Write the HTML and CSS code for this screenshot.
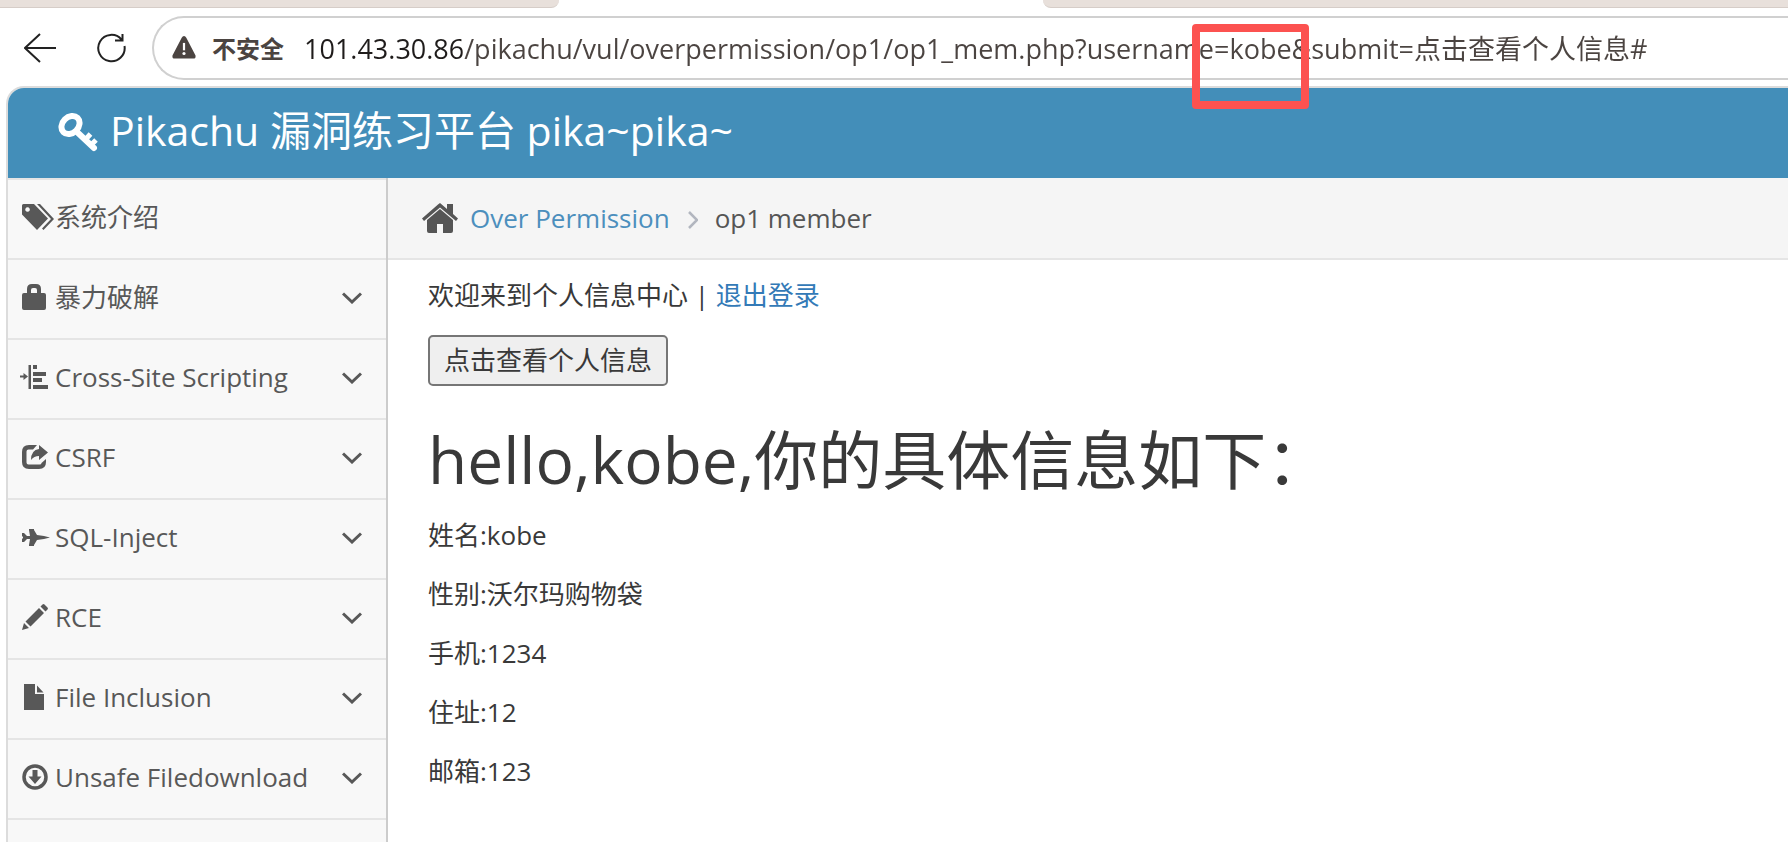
FILE: index.html
```html
<!DOCTYPE html>
<html lang="zh-CN">
<head>
  <meta charset="UTF-8">
  <meta name="viewport" content="width=device-width, initial-scale=1.0">
  <title>Get the pikachu</title>
  <link rel="stylesheet" href="styles.css">
</head>
<body>
  <!-- icons used more than once -->
  <svg class="sprite" aria-hidden="true">
    <symbol id="chevron" viewBox="0 0 20 12">
      <path d="M1 1.500L10 10L19 1.500" fill="none" stroke="currentColor" stroke-width="3"/>
    </symbol>
  </svg>

  <div class="tab-strip">
    <div class="tab tab-left"></div>
    <div class="tab tab-right"></div>
  </div>

  <div class="toolbar">
    <button type="button" class="nav-btn" aria-label="Back">
      <svg width="32" height="32" viewBox="0 0 32 32" fill="none" stroke="#222" stroke-width="2"><path d="M32 16H1M16 2L1 16L16 30"/></svg>
    </button>
    <button type="button" class="nav-btn" aria-label="Reload">
      <svg width="32" height="32" viewBox="0 0 32 32" fill="none" stroke="#222" stroke-width="2"><path d="M28.500 14A13.200 13.200 0 1 1 25.500 7.500M26.500 2V8.500H19"/></svg>
    </button>
    <div class="address">
      <svg width="24" height="24" viewBox="0 0 26 26"><path fill="#4b4441" d="M13 0Q14.500 0 15.500 2L25.500 21Q26 24.500 23 24.500H3Q0 24.500 .5 21L10.500 2Q11.500 0 13 0Z"/><path fill="#fff" d="M11.800 7.500h2.400v8h-2.400z"/><circle cx="13" cy="19" r="1.700" fill="#fff"/></svg>
      <label for="url">不安全</label>
      <input type="text" id="url" value="101.43.30.86/pikachu/vul/overpermission/op1/op1_mem.php?username=kobe&amp;submit=点击查看个人信息#">
    </div>
    <div class="marker"></div>
  </div>

  <div class="page">
    <header class="navbar">
      <a href="#" class="brand">
        <svg width="40" height="40" viewBox="0 0 40 40" fill="none" stroke="#fff"><ellipse cx="12.500" cy="13" rx="8" ry="10" stroke-width="6" transform="rotate(45 12.500 13)"/><path d="M19 20L36 36" stroke-width="6" stroke-linecap="round"/><path d="M27 28L32.500 22M33 33L38 28" stroke-width="5"/></svg>
        Pikachu 漏洞练习平台 pika~pika~
      </a>
    </header>

    <div class="main-container">
      <nav class="sidebar">
        <ul>
          <li><a href="#">
            <svg viewBox="0 0 32 26"><path d="M0 1.500Q0 0 1.500 0H12L26 14.500L15 26L0 10.500ZM5.500 3.200A2.300 2.300 0 1 0 5.600 3.200Z" fill-rule="evenodd"/><path d="M15 0H18L32 15L21.500 26L20 24.500L29 15Z"/></svg>
            系统介绍</a></li>
          <li><a href="#">
            <svg viewBox="0 0 32 26"><path d="M5 9V5Q5 0 10 0H14Q19 0 19 5V9H22Q24 9 24 11V24Q24 26 22 26H2Q0 26 0 24V11Q0 9 2 9ZM9 9H15V6Q15 4 13 4H11Q9 4 9 6Z" fill-rule="evenodd"/></svg>
            暴力破解<svg class="arrow"><use href="#chevron"/></svg></a></li>
          <li><a href="#">
            <svg viewBox="0 0 32 26"><path d="M-2 11.500H1.500V9L6 12.500L1.500 16V13.500H-2ZM6.500 1H9V25H6.500ZM11 1H15V5H11ZM11 8H24V12H11ZM11 14H20V18H11ZM11 21H26V25H11Z"/></svg>
            Cross-Site Scripting<svg class="arrow"><use href="#chevron"/></svg></a></li>
          <li><a href="#">
            <svg viewBox="0 0 32 26"><path d="M15 1H7Q0 1 0 8V18Q0 25 7 25H17Q24 25 24 18V15L19.500 19Q19.500 20.500 17.500 20.500H6.500Q4.500 20.500 4.500 18.500V7.500Q4.500 5.500 6.500 5.500H11Z"/><path d="M17 1L26 8.500L17 16V12Q12 12 9 16Q9 6 17 5Z"/></svg>
            CSRF<svg class="arrow"><use href="#chevron"/></svg></a></li>
          <li><a href="#">
            <svg viewBox="0 0 32 26"><path d="M0 9H2L5 12H8L7 6V5H12V6L15 11L22 12L28 13.500L22 15L15 16L12 21V22H7V21L8 15H5L2 18H0V15L1 14V13L0 12Z"/></svg>
            SQL-Inject<svg class="arrow"><use href="#chevron"/></svg></a></li>
          <li><a href="#">
            <svg viewBox="0 0 32 26"><path d="M0 26L2 19L7 24ZM3.500 17.500L17 4L22 9L8.500 22.500ZM18.500 2.500L20.500 .5Q21.500 -.5 22.500 .5L25.500 3.500Q26.500 4.500 25.500 5.500L23.500 7.500Z"/></svg>
            RCE<svg class="arrow"><use href="#chevron"/></svg></a></li>
          <li><a href="#">
            <svg viewBox="0 0 32 26"><path d="M2 0H13V10H22V26H2ZM15 1.500L21.500 8.500H15Z"/></svg>
            File Inclusion<svg class="arrow"><use href="#chevron"/></svg></a></li>
          <li><a href="#">
            <svg viewBox="0 0 32 26"><circle cx="13" cy="13" r="11" fill="none" stroke="currentColor" stroke-width="3.500"/><path d="M10.500 6H15.500V12.500H19.500L13 20L6.500 12.500H10.500Z"/></svg>
            Unsafe Filedownload<svg class="arrow"><use href="#chevron"/></svg></a></li>
        </ul>
      </nav>

      <main class="main-content">
        <div class="breadcrumbs">
          <svg class="home" width="36" height="30" viewBox="0 0 36 30"><path d="M18 6L31 17V28Q31 30 29 30H21V21H15V30H7Q5 30 5 28V17Z"/><path d="M18 0L25 6V1H31V11L36 15.500L34 18L18 4.500L2 18L0 15.500L16 1.500Q17 .5 18 0Z"/></svg>
          <a href="#">Over Permission</a>
          <svg class="sep" width="10" height="18" viewBox="0 0 10 18"><path d="M1 1L9 9L1 17" fill="none" stroke="#b2b6bf" stroke-width="2.500"/></svg>
          <span>op1 member</span>
        </div>

        <div class="page-content">
          <p>欢迎来到个人信息中心 | <a href="#">退出登录</a></p>
          <form method="get">
            <button type="submit" name="submit">点击查看个人信息</button>
          </form>
          <h1>hello,kobe,你的具体信息如下：</h1>
          <p>姓名:kobe</p>
          <p>性别:沃尔玛购物袋</p>
          <p>手机:1234</p>
          <p>住址:12</p>
          <p>邮箱:123</p>
        </div>
      </main>
    </div>
  </div>
</body>
</html>
```
FILE: styles.css
```css
*, *:before, *:after { box-sizing: border-box; }
body {
  margin: 0; min-height: 100vh; display: flex; flex-direction: column;
  font-family: "Open Sans", "Noto Sans CJK SC", sans-serif;
  font-size: 26px; line-height: 39px; color: #393939; background-color: #fff;
}
a { color: #337ab7; text-decoration: none; }
p { margin: 0 0 20px; }
.sprite { position: absolute; width: 0; height: 0; }

/* browser bar */
.tab-strip { display: flex; justify-content: space-between; gap: 484px; height: 8px; }
.tab { background-color: #e8e0db; border-bottom: 1px solid #d6cdc8; }
.tab-left { flex: 3; border-bottom-right-radius: 16px; }
.tab-right { flex: 4; border-bottom-left-radius: 16px; }
.toolbar { position: relative; display: flex; align-items: center; padding: 8px 0 6px 24px; }
.nav-btn { display: flex; padding: 0; margin-right: 40px; border: 0; background: none; cursor: pointer; }
.nav-btn + .nav-btn { margin-right: 24px; }
.address {
  flex: 1; display: flex; align-items: center; height: 64px; padding-left: 18px;
  border: 2px solid #d0d0d0; border-right: 0; border-radius: 32px 0 0 32px;
}
.address label { margin: 0 20px 0 16px; font-size: 24px; font-weight: bold; color: #4b4441; }
/* host part of the url is darker than the path */
.address input {
  flex: 1; min-width: 0; padding: 0; border: 0; outline: 0; font: inherit; font-size: 27px;
  color: transparent; background: linear-gradient(90deg, #1f1c1b 158px, #4b4441 158px);
  -webkit-background-clip: text; background-clip: text;
}
.marker {
  position: absolute; left: 1192px; top: 16px; width: 117px; height: 85px;
  border: 8px solid #fc5250; border-radius: 4px;
}

/* page */
.page {
  flex: 1; display: flex; flex-direction: column; margin-left: 6px;
  border: 2px solid #dcdcdc; border-width: 2px 0 0 2px; border-top-left-radius: 18px;
}
.navbar { display: flex; align-items: center; height: 90px; padding: 0 0 6px 50px; background-color: #438eb9; border-top-left-radius: 16px; }
.brand { display: flex; align-items: center; gap: 12px; font-size: 41px; color: #fff; }
.brand svg { margin-top: 4px; }
.main-container { flex: 1; display: flex; }
.sidebar { width: 380px; background-color: #f8f8f8; border-right: 2px solid #ccc; }
.sidebar ul { margin: 0; padding: 0; list-style: none; border-top: 2px solid #e5e5e5; }
.sidebar li { border-bottom: 2px solid #e5e5e5; }
.sidebar a { display: flex; align-items: center; height: 78px; padding: 0 24px 4px 14px; color: #585858; }
.sidebar svg { width: 32px; height: 26px; margin-right: 1px; fill: currentColor; overflow: visible; }
.sidebar .arrow { width: 20px; height: 12px; margin: 2px 0 0 auto; }
.main-content { flex: 1; min-width: 0; }
.breadcrumbs {
  display: flex; align-items: center; height: 82px; padding-left: 34px;
  background-color: #f5f5f5; border-bottom: 2px solid #e5e5e5; color: #555;
}
.breadcrumbs a { color: #4c8fbd; }
.home { margin-right: 12px; fill: #555; }
.sep { margin: 4px 17px 0 18px; }
.page-content { padding: 16px 40px; }
.page-content button {
  display: block; height: 51px; padding: 0 14px; border: 2px solid #767676; border-radius: 5px;
  font: inherit; color: #393939; background-color: #efefef; cursor: pointer;
}
h1 { margin: 38px 0 20px; font-size: 64px; font-weight: 400; line-height: 72px; }
```
